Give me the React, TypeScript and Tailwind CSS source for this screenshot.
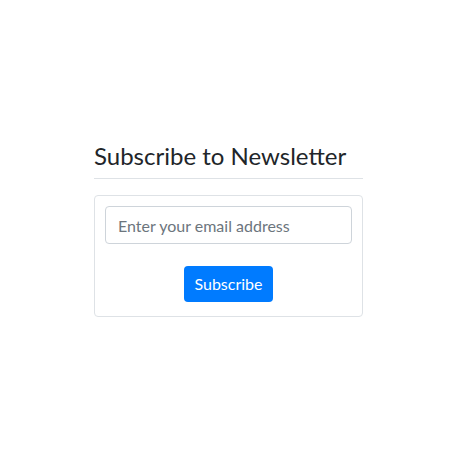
import React from 'react';

export default function App() {
  return (
    <div className="min-h-[458px] bg-white pl-[94px] pt-[141px] font-['Lato',sans-serif] text-[#212529]">
      <div className="w-[269px]">
        <h4 className="text-[24px] leading-[29px] font-normal pb-2 border-b border-[#dee2e6] mb-4">
          Subscribe to Newsletter
        </h4>
        <div className="border border-[#dee2e6] rounded p-[10px] flex flex-col items-center">
          <input
            type="email"
            placeholder="Enter your email address"
            className="w-full h-[38px] px-3 text-base border border-[#ced4da] rounded placeholder:text-[#6c757d] outline-none"
          />
          <button className="mt-[22px] mb-[4px] h-[36px] w-[89px] bg-[#007bff] text-white text-base rounded">
            Subscribe
          </button>
        </div>
      </div>
    </div>
  );
}
